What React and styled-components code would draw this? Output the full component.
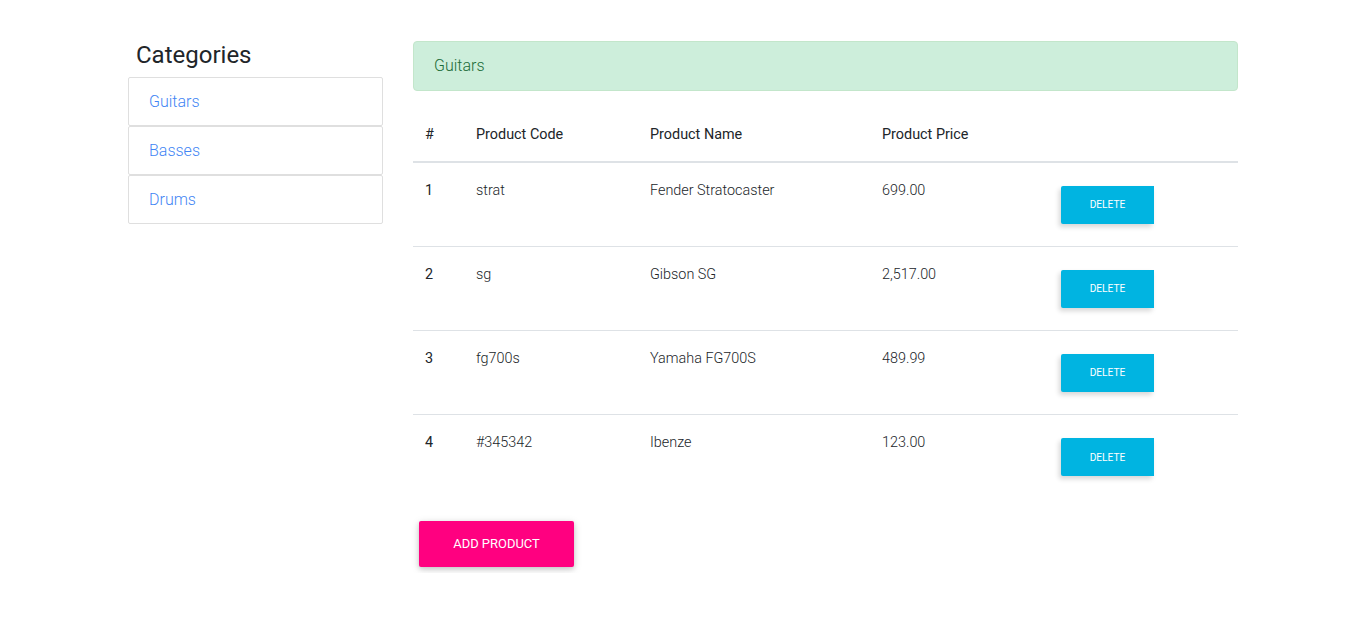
import React from 'react';
import styled, { createGlobalStyle } from 'styled-components';

const GlobalStyle = createGlobalStyle`
  body {
    margin: 0;
    font-family: 'Roboto', sans-serif;
    font-weight: 300;
    color: #212529;
    background: #fff;
  }
  * {
    box-sizing: border-box;
  }
`;

const Container = styled.div`
  width: 1140px;
  margin: 0 auto;
  padding: 41px 15px 0;
  display: flex;
`;

const Sidebar = styled.div`
  width: 255px;
  flex-shrink: 0;
  margin-right: 30px;
`;

const Heading = styled.h4`
  margin: 0 0 7px;
  padding-left: 8px;
  font-size: 24px;
  line-height: 29px;
  font-weight: 400;
  color: #212529;
`;

const CategoryList = styled.ul`
  list-style: none;
  margin: 0;
  padding: 0;
`;

const CategoryItem = styled.li`
  padding: 12px 20px 11px;
  border: 1px solid #dfdfdf;
  border-radius: 2px;
  font-size: 16px;
  line-height: 24px;
  color: #4285f4;
  cursor: pointer;
`;

const Main = styled.div`
  flex: 1;
`;

const Alert = styled.div`
  padding: 12px 20px;
  margin-bottom: 16px;
  border: 1px solid #c3e6cb;
  border-radius: 4px;
  background: #cdeedb;
  color: #1b6b37;
  font-size: 16px;
  line-height: 24px;
`;

const Table = styled.table`
  width: 100%;
  border-collapse: collapse;
  margin-bottom: 16px;
`;

const Th = styled.th`
  text-align: left;
  font-weight: 400;
  font-size: 14.4px;
  line-height: 21.6px;
  padding: 16.6px 12px 16px;
  vertical-align: top;
  width: ${p => p.w}px;
  border-bottom: 2px solid #dee2e6;
`;

const Tr = styled.tr`
  border-top: 1px solid #dee2e6;

  &:first-child {
    border-top: none;
  }
`;

const Td = styled.td`
  font-size: 14.4px;
  line-height: 21.6px;
  font-weight: ${p => (p.head ? 400 : 300)};
  padding: 16.6px 12px 16.5px;
  vertical-align: top;
`;

const DeleteButton = styled.button`
  display: block;
  width: 93px;
  height: 38px;
  margin: 6px;
  border: none;
  border-radius: 2px 0 0 2px;
  background: #00b4e1;
  color: #fff;
  font-family: 'Roboto', sans-serif;
  font-size: 10.2px;
  font-weight: 400;
  text-transform: uppercase;
  box-shadow: -2px 3px 5px 0 rgba(0, 0, 0, 0.16);
  cursor: pointer;
`;

const AddButton = styled.button`
  margin: 6px;
  padding: 13.4px 34.2px;
  border: none;
  border-radius: 2px;
  background: #ff0080;
  color: #fff;
  font-family: 'Roboto', sans-serif;
  font-size: 12.96px;
  line-height: 19.4px;
  font-weight: 400;
  text-transform: uppercase;
  box-shadow: 0 2px 5px 0 rgba(0, 0, 0, 0.16), 0 2px 10px 0 rgba(0, 0, 0, 0.12);
  cursor: pointer;
`;

const categories = ['Guitars', 'Basses', 'Drums'];

const products = [
  { code: 'strat', name: 'Fender Stratocaster', price: '699.00' },
  { code: 'sg', name: 'Gibson SG', price: '2,517.00' },
  { code: 'fg700s', name: 'Yamaha FG700S', price: '489.99' },
  { code: '#345342', name: 'Ibenze', price: '123.00' },
];

const App = () => (
  <>
    <GlobalStyle />
    <Container>
      <Sidebar>
        <Heading>Categories</Heading>
        <CategoryList>
          {categories.map(c => (
            <CategoryItem key={c}>{c}</CategoryItem>
          ))}
        </CategoryList>
      </Sidebar>
      <Main>
        <Alert>Guitars</Alert>
        <Table>
          <thead>
            <tr>
              <Th w={51}>#</Th>
              <Th w={174}>Product Code</Th>
              <Th w={232}>Product Name</Th>
              <Th w={173}>Product Price</Th>
              <Th w={195}></Th>
            </tr>
          </thead>
          <tbody>
            {products.map((p, i) => (
              <Tr key={p.code}>
                <Td head>{i + 1}</Td>
                <Td>{p.code}</Td>
                <Td>{p.name}</Td>
                <Td>{p.price}</Td>
                <Td>
                  <DeleteButton>Delete</DeleteButton>
                </Td>
              </Tr>
            ))}
          </tbody>
        </Table>
        <AddButton>Add Product</AddButton>
      </Main>
    </Container>
  </>
);

export default App;
